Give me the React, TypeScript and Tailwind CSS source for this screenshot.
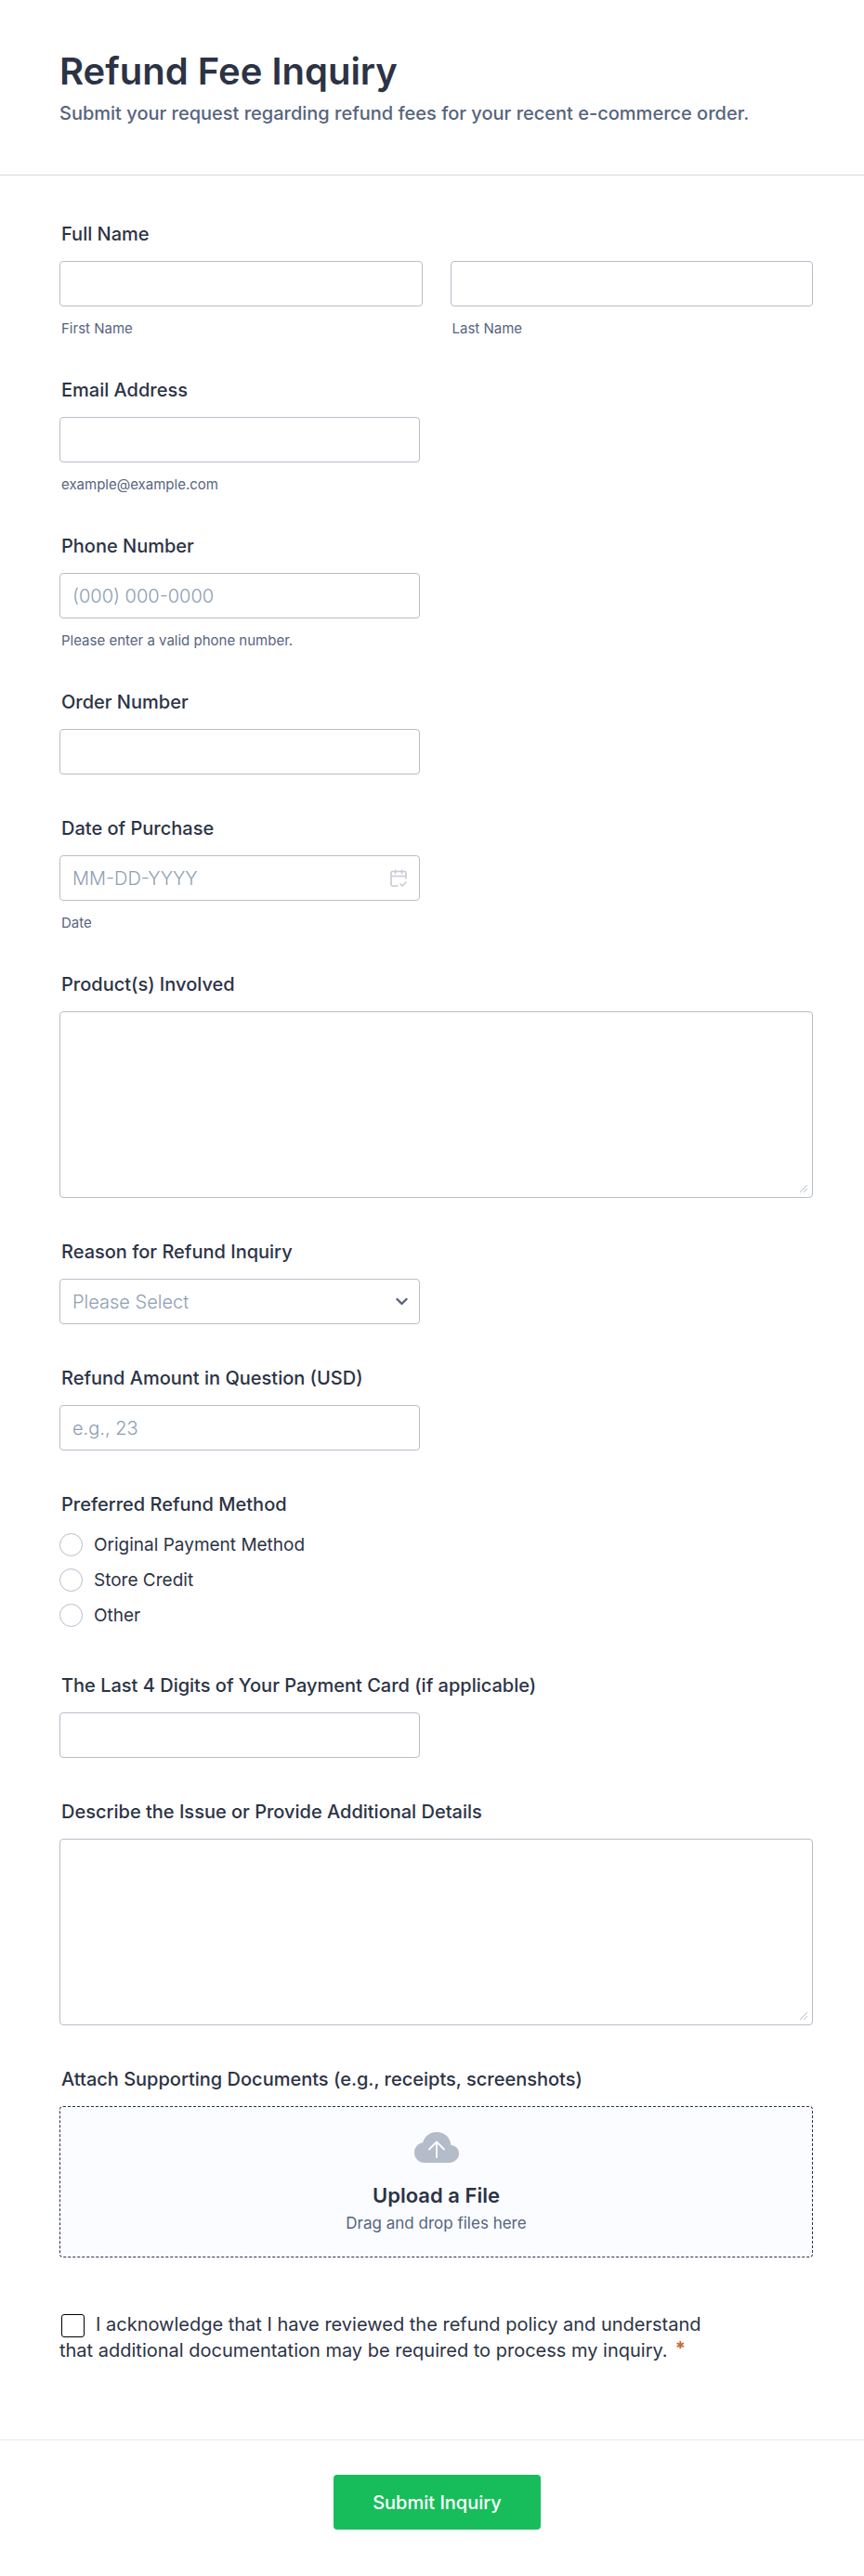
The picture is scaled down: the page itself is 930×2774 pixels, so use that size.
import React from 'react';

const inputClass =
  'block h-[49px] w-full rounded-[4px] border border-[#b8bdc9] bg-white px-[13px] text-[20px] font-light text-[#2c3345] placeholder:text-[#8d9eb3]';

interface FieldProps {
  id: string;
  label: string;
  hint?: string;
  wide?: boolean;
  children: React.ReactNode;
}

const Field: React.FC<FieldProps> = ({ id, label, hint, wide, children }) => (
  <div className={wide ? 'w-full' : 'w-full max-w-[388px]'}>
    <label htmlFor={id} className="mb-[16px] block pl-[2px] text-[20px] leading-[26px] font-medium whitespace-nowrap">
      {label}
    </label>
    {children}
    {hint && <Hint>{hint}</Hint>}
  </div>
);

const Hint: React.FC<{ children: React.ReactNode }> = ({ children }) => (
  <p className="mt-[15px] pl-[2px] text-[15px] leading-[17px] text-[#57647e]">{children}</p>
);

const LongText: React.FC<{ id: string }> = ({ id }) => (
  <div className="relative">
    <textarea
      id={id}
      className="block h-[201px] w-full resize-none rounded-[4px] border border-[#b8bdc9] bg-white px-[13px] py-[10px] text-[20px] font-light"
    />
    <svg className="pointer-events-none absolute right-[5px] bottom-[5px]" width="10" height="10" viewBox="0 0 10 10" fill="none" stroke="#b8bdc9">
      <path d="M1 9 9 1M5 9 9 5" />
    </svg>
  </div>
);

const refundMethods = ['Original Payment Method', 'Store Credit', 'Other'];

const App: React.FC = () => {
  return (
    <form
      className="bg-white font-['Inter',sans-serif] text-[#2c3345]"
      onSubmit={e => e.preventDefault()}
    >
      <header className="border-b border-[#d7d8e1] pt-[52px] pr-[55px] pb-[52px] pl-[64px]">
        <h1 className="text-[40px] leading-[50px] font-semibold">Refund Fee Inquiry</h1>
        <p className="mt-[7px] text-[20px] leading-[27px] font-medium text-[#57647e]">
          Submit your request regarding refund fees for your recent e-commerce order.
        </p>
      </header>

      <div className="flex flex-col gap-[45px] pt-[50px] pr-[55px] pb-[82px] pl-[64px]">
        <fieldset>
          <legend className="mb-[16px] pl-[2px] text-[20px] leading-[26px] font-medium">Full Name</legend>
          <div className="grid grid-cols-2 gap-[30px]">
            <label>
              <input type="text" className={inputClass} />
              <Hint>First Name</Hint>
            </label>
            <label>
              <input type="text" className={inputClass} />
              <Hint>Last Name</Hint>
            </label>
          </div>
        </fieldset>

        <Field id="email" label="Email Address" hint="example@example.com">
          <input id="email" type="email" className={inputClass} />
        </Field>

        <Field id="phone" label="Phone Number" hint="Please enter a valid phone number.">
          <input id="phone" type="tel" placeholder="(000) 000-0000" className={inputClass} />
        </Field>

        <Field id="order" label="Order Number">
          <input id="order" type="text" className={inputClass} />
        </Field>

        <Field id="date" label="Date of Purchase" hint="Date">
          <div className="relative">
            <input id="date" type="text" placeholder="MM-DD-YYYY" className={inputClass} />
            <svg
              className="pointer-events-none absolute top-[15px] right-[14px]"
              width="18"
              height="19"
              viewBox="0 0 18 19"
              fill="none"
              stroke="#c6cad5"
              strokeWidth="1.6"
              strokeLinecap="round"
              strokeLinejoin="round"
            >
              <path d="M17 10V4a1.5 1.5 0 0 0-1.5-1.5h-13A1.5 1.5 0 0 0 1 4v12.5a1.5 1.5 0 0 0 1.5 1.5H8M1 7.5h16M5.5 1v3.5M12.5 1v3.5M11 16l2 2 4-4" />
            </svg>
          </div>
        </Field>

        <Field id="products" label="Product(s) Involved" wide>
          <LongText id="products" />
        </Field>

        <Field id="reason" label="Reason for Refund Inquiry">
          <div className="relative">
            <select
              id="reason"
              defaultValue=""
              className="block h-[49px] w-full appearance-none rounded-[4px] border border-[#b8bdc9] bg-white px-[13px] text-[20px] font-light text-[#8d9eb3]"
            >
              <option value="">Please Select</option>
              <option>Fee charged in error</option>
              <option>Other</option>
            </select>
            <svg
              className="pointer-events-none absolute top-[20px] right-[13px]"
              width="13"
              height="9"
              viewBox="0 0 13 9"
              fill="none"
              stroke="#57647e"
              strokeWidth="2.4"
              strokeLinecap="round"
              strokeLinejoin="round"
            >
              <path d="M1.5 2l5 5 5-5" />
            </svg>
          </div>
        </Field>

        <Field id="amount" label="Refund Amount in Question (USD)">
          <input id="amount" type="text" placeholder="e.g., 23" className={inputClass} />
        </Field>

        <fieldset className="pb-[5px]">
          <legend className="mb-[18px] pl-[2px] text-[20px] leading-[26px] font-medium">
            Preferred Refund Method
          </legend>
          <div className="flex flex-col items-start gap-[13px]">
            {refundMethods.map(method => (
              <label key={method} className="flex items-center gap-[12px] text-[19px] leading-[25px]">
                <input
                  type="radio"
                  name="method"
                  className="size-[25px] appearance-none rounded-full border border-[#b8bdc9] bg-white checked:border-8"
                />
                {method}
              </label>
            ))}
          </div>
        </fieldset>

        <Field id="card" label="The Last 4 Digits of Your Payment Card (if applicable)">
          <input id="card" type="text" className={inputClass} />
        </Field>

        <Field id="details" label="Describe the Issue or Provide Additional Details" wide>
          <LongText id="details" />
        </Field>

        <Field id="files" label="Attach Supporting Documents (e.g., receipts, screenshots)" wide>
          <button
            id="files"
            type="button"
            className="flex w-full flex-col items-center rounded-[4px] border border-dashed border-[#2c3345] bg-[#fafcff] pt-[27px] pb-[24px]"
          >
            <svg width="48" height="33" viewBox="0 0 48 33">
              <path
                fill="#b4bbc9"
                d="M24 0C16.5 0 11 4.5 9 11.5 4 12 0 16.5 0 22c0 6 4.5 11 11 11h26c6.5 0 11-4.5 11-10 0-5-3.5-8.5-8.5-9C38.5 5.5 32.5 0 24 0Z"
              />
              <path fill="none" stroke="#fff" strokeWidth="1.8" strokeLinecap="round" strokeLinejoin="round" d="M24 27V10.5M16 18.5l8-8 8 8" />
            </svg>
            <span className="mt-[21px] text-[22px] leading-[28px] font-semibold">Upload a File</span>
            <span className="mt-[4px] text-[17px] leading-[24px] text-[#57647e]">Drag and drop files here</span>
          </button>
        </Field>

        <div className="max-w-[700px] pt-[13px] text-[20px] leading-[28px]">
          <input
            id="acknowledge"
            type="checkbox"
            required
            className="mr-[12px] ml-[2px] inline-block size-[25px] appearance-none rounded-[3px] border border-black bg-white align-middle checked:bg-[#2c3345]"
          />
          <label htmlFor="acknowledge">
            I acknowledge that I have reviewed the refund policy and understand that additional documentation may be
            required to process my inquiry.
          </label>
          <span className="ml-[8px] inline-block align-top leading-[24px] font-bold text-[#c76a38]">*</span>
        </div>
      </div>

      <footer className="flex justify-center border-t border-[#e6e6f0] pt-[37px] pr-[53px] pb-[50px] pl-[64px]">
        <button type="submit" className="h-[59px] min-w-[223px] rounded-[4px] bg-[#18bd5b] px-[40px] text-[20px] font-medium text-white">
          Submit Inquiry
        </button>
      </footer>
    </form>
  );
};

export default App;
